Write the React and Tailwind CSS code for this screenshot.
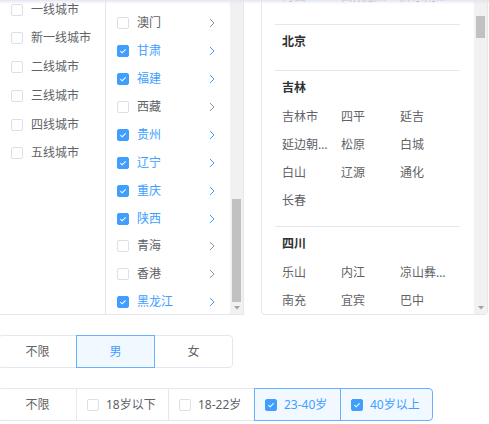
import React from 'react';

const levels = ['一线城市', '新一线城市', '二线城市', '三线城市', '四线城市', '五线城市'];

const provinces = [
  { name: '澳门', on: false },
  { name: '甘肃', on: true },
  { name: '福建', on: true },
  { name: '西藏', on: false },
  { name: '贵州', on: true },
  { name: '辽宁', on: true },
  { name: '重庆', on: true },
  { name: '陕西', on: true },
  { name: '青海', on: false },
  { name: '香港', on: false },
  { name: '黑龙江', on: true },
];

const groups = [
  { title: '北京', cities: [] },
  { title: '吉林', cities: ['吉林市', '四平', '延吉', '延边朝鲜族自治州', '松原', '白城', '白山', '辽源', '通化', '长春'] },
  { title: '四川', cities: ['乐山', '内江', '凉山彝族自治州', '南充', '宜宾', '巴中'] },
];

const ages = [
  { label: '18岁以下', on: false, w: 'w-[93px]' },
  { label: '18-22岁', on: false, w: 'w-[87px]' },
  { label: '23-40岁', on: true, w: 'w-[87px]' },
  { label: '40岁以上', on: true, w: 'w-[93px]' },
];

const Box = ({ on }) =>
  on ? (
    <span className="flex h-[12px] w-[12px] shrink-0 items-center justify-center rounded-[2px] border border-[#409eff] bg-[#409eff]">
      <svg width="8" height="8" viewBox="0 0 8 8">
        <path d="M1.4 4.1l1.8 1.7L6.6 2.3" fill="none" stroke="#fff" strokeWidth="1.1" />
      </svg>
    </span>
  ) : (
    <span className="h-[12px] w-[12px] shrink-0 rounded-[2px] border border-[#dcdfe6] bg-white" />
  );

const Chevron = ({ on }) => (
  <svg width="6" height="10" viewBox="0 0 6 10" className="shrink-0">
    <path d="M1 1l4 4-4 4" fill="none" stroke={on ? '#409eff' : '#909399'} strokeWidth="1" />
  </svg>
);

const Arrow = () => (
  <div className="flex h-[12px] shrink-0 items-center justify-center">
    <svg width="6" height="4" viewBox="0 0 6 4">
      <path d="M0 0h6L3 3.5z" fill="#a3a3a3" />
    </svg>
  </div>
);

const App = () => {
  return (
    <div className="relative h-[424px] w-[489px] overflow-hidden bg-white font-['Noto_Sans','Noto_Sans_CJK_SC',sans-serif] text-[12px] text-[#606266]">
      <div className="pointer-events-none absolute inset-x-0 top-0 z-20 h-[4px] bg-linear-to-b from-[#e2e6ee] to-transparent" />

      <div className="flex items-start">
        {/* cascader */}
        <div className="flex h-[315px] w-[244px] shrink-0 border-r border-b border-[#e4e7ed]">
          <div className="w-[106px] shrink-0 overflow-hidden border-r border-[#e4e7ed]">
            <div className="-mt-[4.6px]">
              {levels.map((l) => (
                <div key={l} className="flex h-[28.7px] items-center gap-[8px] pl-[11px]">
                  <Box on={false} />
                  <span className="leading-none whitespace-nowrap">{l}</span>
                </div>
              ))}
            </div>
          </div>
          <div className="flex min-w-0 flex-1">
            <div className="min-w-0 flex-1 overflow-hidden pt-[9.4px]">
              {provinces.map((p) => (
                <div key={p.name} className="flex h-[27.9px] items-center pr-[15px] pl-[11px]">
                  <Box on={p.on} />
                  <span className={p.on ? 'ml-[8px] flex-1 leading-none text-[#409eff]' : 'ml-[8px] flex-1 leading-none'}>{p.name}</span>
                  <Chevron on={p.on} />
                </div>
              ))}
            </div>
            <div className="flex w-[13px] shrink-0 flex-col bg-[#f1f1f1]">
              <div className="mx-auto mt-[199px] h-[103px] w-[9px] bg-[#c1c1c1]" />
              <div className="flex-1" />
              <Arrow />
            </div>
          </div>
        </div>

        {/* city panel */}
        <div className="ml-[17px] flex h-[315px] w-[227px] shrink-0 rounded-b-[4px] border-x border-b border-[#e4e7ed]">
          <div className="min-w-0 flex-1 overflow-hidden">
            <div className="-mt-[15px] mr-[14px] ml-[13px]">
              <div className="grid grid-cols-[59px_59px_59px] pb-[15px] pl-[7px]">
                {['海口', '西双版纳傣族自治州', '黔东南苗族侗族自治州'].map((c) => (
                  <div key={c} className="flex h-[24px] items-center">
                    <span className="w-[50px] truncate">{c}</span>
                  </div>
                ))}
              </div>
              {groups.map((g) => (
                <div key={g.title} className={g.cities.length ? 'border-t border-[#e4e7ed] pb-[11px] pl-[7px]' : 'h-[46px] border-t border-[#e4e7ed] pl-[7px]'}>
                  <div className="h-[32px] pt-[8px] leading-[18px] font-bold text-[#303133]">{g.title}</div>
                  {g.cities.length > 0 && (
                    <div className="grid grid-cols-[59px_59px_59px]">
                      {g.cities.map((c) => (
                        <div key={c} className="flex h-[28px] items-center">
                          <span className="w-[50px] truncate">{c}</span>
                        </div>
                      ))}
                    </div>
                  )}
                </div>
              ))}
            </div>
          </div>
          <div className="flex w-[13px] shrink-0 flex-col bg-[#f1f1f1]">
            <div className="mx-auto mt-[16px] h-[22px] w-[9px] bg-[#c1c1c1]" />
            <div className="flex-1" />
            <Arrow />
          </div>
        </div>
      </div>

      {/* gender */}
      <div className="mt-[20px] -ml-[2px] flex">
        <div className="flex h-[33px] w-[79px] items-center justify-center rounded-l-[4px] border border-[#e4e7ed]">不限</div>
        <div className="relative z-10 -ml-px flex h-[33px] w-[79px] items-center justify-center border border-[#66b1ff] bg-[#f2f8ff] text-[#409eff]">男</div>
        <div className="-ml-px flex h-[33px] w-[79px] items-center justify-center rounded-r-[4px] border border-[#e4e7ed]">女</div>
      </div>

      {/* age */}
      <div className="mt-[20px] -ml-[2px] flex">
        <div className="flex h-[33px] w-[79px] items-center justify-center rounded-l-[4px] border border-[#e4e7ed]">不限</div>
        {ages.map((a, i) => (
          <div
            key={a.label}
            className={
              (a.on
                ? 'relative z-10 border-[#66b1ff] bg-[#f2f8ff] text-[#409eff] '
                : 'border-[#e4e7ed] ') +
              (i === ages.length - 1 ? 'rounded-r-[4px] ' : '') +
              '-ml-px flex h-[33px] items-center gap-[7px] border pl-[10px] ' +
              a.w
            }
          >
            <Box on={a.on} />
            <span className="leading-none whitespace-nowrap">{a.label}</span>
          </div>
        ))}
      </div>
    </div>
  );
};

export default App;
